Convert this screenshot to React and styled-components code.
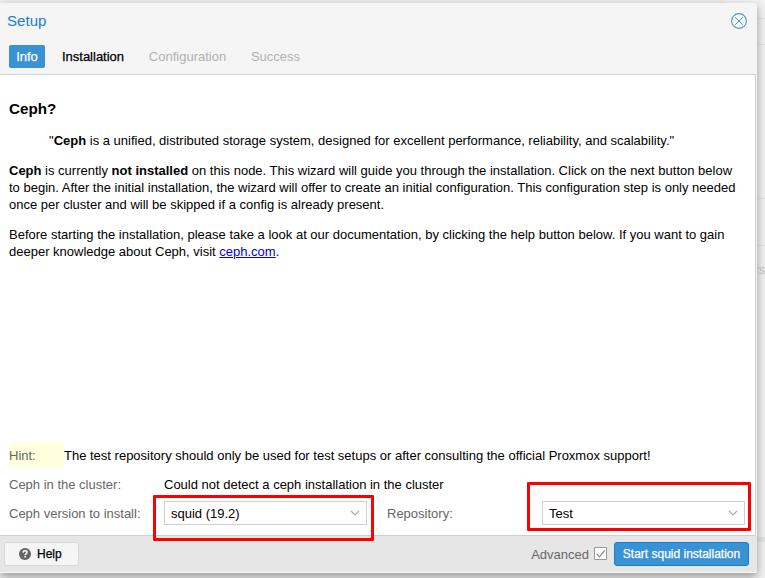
import React from 'react';
import styled, { createGlobalStyle } from 'styled-components';

const GlobalStyle = createGlobalStyle`
  * { box-sizing: border-box; }
  html, body { margin: 0; height: 100%; overflow: hidden; }
  body { font: 13px/17px "Liberation Sans", Arial, sans-serif; color: #000; }
`;

const Page = styled.div`
  position: relative;
  width: 765px;
  height: 578px;
  padding-top: 3px;
  overflow: hidden;
  background: #f1f1f1;
`;

const Ghost = styled.div`
  position: absolute;
  left: ${(p) => p.$x}px;
  top: ${(p) => p.$y}px;
  width: ${(p) => p.$w}px;
  height: ${(p) => p.$h}px;
  background: ${(p) => p.$color || '#e2e2e2'};
`;

const GhostText = styled.span`
  position: absolute;
  left: 755px;
  top: 262px;
  color: #bcbcbc;
  font-size: 12px;
`;

const Dialog = styled.section`
  position: relative;
  display: flex;
  flex-direction: column;
  width: 757px;
  height: 570px;
  border-radius: 0 3px 3px 0;
  background: #f5f5f5;
  box-shadow: 0 4px 10px #999;
`;

const Header = styled.header`
  display: flex;
  justify-content: space-between;
  align-items: center;
  height: 36px;
  padding: 0 10px 0 7px;
`;

const Title = styled.h1`
  margin: 0 0 2px;
  font-size: 15px;
  font-weight: 400;
  letter-spacing: 0.05px;
  color: #157fcc;
`;

const Close = styled.button`
  display: flex;
  padding: 0;
  border: 0;
  background: none;
`;

const Tabs = styled.nav`
  display: flex;
  align-items: flex-start;
  gap: 10px;
  height: 35px;
  padding: 6px 9px 0;
`;

const Tab = styled.button`
  width: ${(p) => p.$w}px;
  height: 23px;
  padding: 0;
  border: 0;
  border-radius: 2px;
  font: 13px/23px "Liberation Sans", Arial, sans-serif;
  white-space: nowrap;
  color: ${(p) => (p.$active ? '#fff' : p.$muted ? '#b1b1b1' : '#000')};
  background: ${(p) => (p.$active ? '#3892d4' : 'transparent')};
  -webkit-text-stroke: ${(p) => (p.$muted ? 0 : 0.25)}px;
`;

const Body = styled.main`
  display: flex;
  flex-direction: column;
  justify-content: space-between;
  width: 756px;
  height: 462px;
  padding: 25px 9px 10px;
  border: solid #cfcfcf;
  border-width: 1px 1px 1px 0;
  background: #fff;
`;

const Heading = styled.h3`
  margin: 0 0 15px;
  font-size: 15.2px;
  line-height: 17px;
`;

const Quote = styled.blockquote`
  margin: 0 40px 13px;
  white-space: nowrap;
`;

const Paragraph = styled.p`
  margin: 0 0 13px;
  white-space: nowrap;
`;

const Link = styled.a`
  color: #0000ee;
  text-decoration: underline;
`;

const Form = styled.div`
  display: flex;
  flex-direction: column;
  gap: 5px;
`;

const Row = styled.div`
  display: flex;
  height: 24px;
  line-height: 26px;
  white-space: nowrap;
`;

const Label = styled.label`
  flex: none;
  width: ${(p) => p.$w || 155}px;
  height: 24px;
  color: #666;
  background: ${(p) => (p.$hint ? '#ffffdd' : 'transparent')};
`;

const Combo = styled.div`
  display: flex;
  justify-content: space-between;
  align-items: center;
  width: 203px;
  height: 24px;
  margin-right: ${(p) => p.$gap || 0}px;
  padding: 0 6px;
  border: 1px solid #cfcfcf;
  line-height: 22px;

  span {
    padding-top: 2px;
  }
`;

const Footer = styled.footer`
  display: flex;
  align-items: center;
  height: 37px;
  padding: 0 8px 2px 4px;
  border-radius: 0 0 3px 0;
  background: #e6e6e6;
  box-shadow: inset 0 -1px #f8f8f8;
`;

const Button = styled.button`
  display: flex;
  justify-content: center;
  align-items: center;
  gap: 7px;
  width: ${(p) => p.$w}px;
  height: 24px;
  padding: 0;
  border: 1px solid ${(p) => (p.$primary ? '#157fcc' : '#d8d8d8')};
  border-radius: 3px;
  background: ${(p) => (p.$primary ? '#3892d4' : '#f5f5f5')};
  color: ${(p) => (p.$primary ? '#fff' : '#000')};
  font: 12px/22px "Liberation Sans", Arial, sans-serif;
  -webkit-text-stroke: 0.25px;
  white-space: nowrap;
`;

const HelpButton = styled(Button)`
  justify-content: flex-start;
  gap: 6px;
  padding-left: 14px;
`;

const Advanced = styled.label`
  display: flex;
  align-items: center;
  gap: 5px;
  margin: 0 7px 0 auto;
  color: #666;

  span {
    padding-top: 2px;
  }
`;

const Marker = styled.div`
  position: absolute;
  left: ${(p) => p.$x}px;
  top: ${(p) => p.$y}px;
  width: ${(p) => p.$w}px;
  height: ${(p) => p.$h}px;
  border: 3px solid #f00;
  border-radius: 1px;
`;

const Chevron = () => (
  <svg width="10" height="6" viewBox="0 0 10 6" fill="none" stroke="#aaa" strokeWidth="1.2">
    <path d="M1 1l4 4 4-4" />
  </svg>
);

export default function App() {
  return (
    <>
      <GlobalStyle />
      <Page>
        <Ghost $x={0} $y={0} $w={725} $h={3} $color="#ececec" />
        <Ghost $x={757} $y={18} $w={8} $h={1} />
        <Ghost $x={757} $y={44} $w={8} $h={1} />
        <Ghost $x={757} $y={198} $w={8} $h={1} />
        <Ghost $x={757} $y={245} $w={8} $h={1} />
        <Ghost $x={757} $y={537} $w={8} $h={5} />
        <GhostText>rs</GhostText>
        <Dialog>
          <Header>
            <Title>Setup</Title>
            <Close aria-label="Close">
              <svg width="16" height="16" viewBox="0 0 16 16" fill="none" stroke="#4a96d0">
                <circle cx="8" cy="8" r="7.4" strokeWidth="1.1" />
                <path d="M4.3 4.3l7.4 7.4M11.7 4.3l-7.4 7.4" strokeWidth="1" />
              </svg>
            </Close>
          </Header>
          <Tabs>
            <Tab $w={36} $active>Info</Tab>
            <Tab $w={76}>Installation</Tab>
            <Tab $w={93} $muted>Configuration</Tab>
            <Tab $w={63} $muted>Success</Tab>
          </Tabs>
          <Body>
            <div>
              <Heading>Ceph?</Heading>
              <Quote>
                "<b>Ceph</b> is a unified, distributed storage system, designed for excellent performance, reliability, and scalability."
              </Quote>
              <Paragraph>
                <b>Ceph</b> is currently <b>not installed</b> on this node. This wizard will guide you through the installation. Click on the next button below
                <br />
                to begin. After the initial installation, the wizard will offer to create an initial configuration. This configuration step is only needed
                <br />
                once per cluster and will be skipped if a config is already present.
              </Paragraph>
              <Paragraph>
                Before starting the installation, please take a look at our documentation, by clicking the help button below. If you want to gain
                <br />
                deeper knowledge about Ceph, visit <Link>ceph.com</Link>.
              </Paragraph>
            </div>
            <Form>
              <Row>
                <Label $w={55} $hint>Hint:</Label>
                <span>The test repository should only be used for test setups or after consulting the official Proxmox support!</span>
              </Row>
              <Row>
                <Label>Ceph in the cluster:</Label>
                <span>Could not detect a ceph installation in the cluster</span>
              </Row>
              <Row>
                <Label>Ceph version to install:</Label>
                <Combo $gap={20}><span>squid (19.2)</span><Chevron /></Combo>
                <Label>Repository:</Label>
                <Combo><span>Test</span><Chevron /></Combo>
              </Row>
            </Form>
          </Body>
          <Footer>
            <HelpButton $w={75}>
              <svg width="12" height="12" viewBox="0 0 12 12" fill="none">
                <circle cx="6" cy="6" r="6" fill="#666" />
                <path d="M4 4.6C4.1 3.2 5 2.8 6 2.8c1.1 0 2 .6 2 1.6C8 5.7 6.2 5.5 6.2 7.2" stroke="#fff" strokeWidth="1.5" />
                <path d="M5.4 8h1.6v1.5H5.4z" fill="#fff" />
              </svg>
              Help
            </HelpButton>
            <Advanced>
              <span>Advanced</span>
              <svg width="13" height="13" viewBox="0 0 13 13" fill="none">
                <path d="M.5.5h12v12H.5z" fill="#fff" stroke="#999" />
                <path d="M2.5 6.8l3 3 5.2-6.5" stroke="#888" strokeWidth="1.2" />
              </svg>
            </Advanced>
            <Button $w={135} $primary>Start squid installation</Button>
          </Footer>
        </Dialog>
        <Marker $x={153} $y={495} $w={221} $h={46} />
        <Marker $x={527} $y={482} $w={224} $h={49} />
      </Page>
    </>
  );
}
